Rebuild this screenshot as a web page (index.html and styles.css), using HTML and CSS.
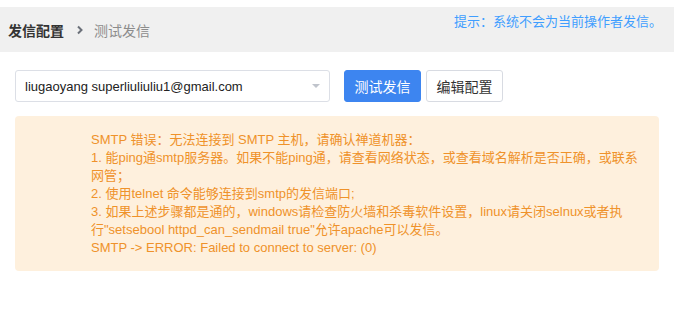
FILE: index.html
```html
<!DOCTYPE html>
<html lang="zh-CN">
<head>
<meta charset="utf-8">
<title>发信配置</title>
<link rel="stylesheet" href="styles.css">
</head>
<body>
<div class="page">
  <div class="header">
    <div class="crumbs">
      <span class="crumb-main">发信配置</span>
      <svg class="chev" width="8" height="10" viewBox="0 0 8 10"><path d="M2 1.5 L5.5 5 L2 8.5" fill="none" stroke="#6b7079" stroke-width="2"/></svg>
      <span class="crumb-sub">测试发信</span>
    </div>
    <div class="tip">提示：系统不会为当前操作者发信。</div>
  </div>
  <div class="content">
    <div class="toolbar">
      <div class="select">
        <span class="select-text">liugaoyang superliuliuliu1@gmail.com</span>
        <span class="caret"></span>
      </div>
      <button class="btn btn-primary">测试发信</button>
      <button class="btn btn-default">编辑配置</button>
    </div>
    <div class="alert">
      <div class="alert-text">
        <div>SMTP 错误：无法连接到 SMTP 主机，请确认禅道机器：</div>
        <div>1. 能ping通smtp服务器。如果不能ping通，请查看网络状态，或查看域名解析是否正确，或联系网管；</div>
        <div>2. 使用telnet 命令能够连接到smtp的发信端口;</div>
        <div>3. 如果上述步骤都是通的，windows请检查防火墙和杀毒软件设置，linux请关闭selnux或者执行"setsebool httpd_can_sendmail true"允许apache可以发信。</div>
        <div>SMTP -&gt; ERROR: Failed to connect to server: (0)</div>
      </div>
    </div>
  </div>
</div>
</body>
</html>
```

FILE: styles.css
```css
* { box-sizing: border-box; }
html, body {
  margin: 0;
  padding: 0;
  background: #fff;
  font-family: "Liberation Sans", "Noto Sans CJK SC", Arial, sans-serif;
}
.page {
  padding-top: 7px;
}
.header {
  height: 45px;
  background: #f0f0f0;
  display: flex;
  justify-content: space-between;
  padding: 0 12px 0 8px;
}
.crumbs {
  display: flex;
  align-items: center;
  height: 100%;
  font-size: 14px;
}
.crumb-main {
  font-weight: bold;
  color: #333;
}
.chev {
  margin: 0 10px 0 12px;
}
.crumb-sub {
  color: #8c8c8c;
}
.tip {
  font-size: 13px;
  color: #409eff;
  padding-top: 7px;
  line-height: 16px;
}
.content {
  padding: 18px 15px 0 15px;
}
.toolbar {
  display: flex;
  align-items: center;
  height: 32px;
}
.select {
  width: 315px;
  height: 32px;
  border: 1px solid #dcdfe6;
  border-radius: 3px;
  display: flex;
  align-items: center;
  justify-content: space-between;
  padding: 0 9px 0 9px;
  font-size: 13px;
  color: #222;
}
.caret {
  width: 0;
  height: 0;
  border-left: 4px solid transparent;
  border-right: 4px solid transparent;
  border-top: 4px solid #c0c4cc;
}
.btn {
  height: 32px;
  font-family: inherit;
  font-size: 14px;
  border-radius: 3px;
  padding: 0;
  width: 77px;
  cursor: pointer;
}
.btn-primary {
  margin-left: 14px;
  background: #3d85f0;
  border: 1px solid #3d85f0;
  color: #fff;
}
.btn-default {
  margin-left: 5px;
  background: #fff;
  border: 1px solid #d8dbe2;
  color: #333;
}
.alert {
  margin-top: 14px;
  width: 644px;
  height: 155px;
  background: #fef0dd;
  border-radius: 4px;
  padding: 15px 0 0 76px;
}
.alert-text {
  width: 555px;
  font-size: 13px;
  line-height: 18px;
  color: #ef922a;
}
```
